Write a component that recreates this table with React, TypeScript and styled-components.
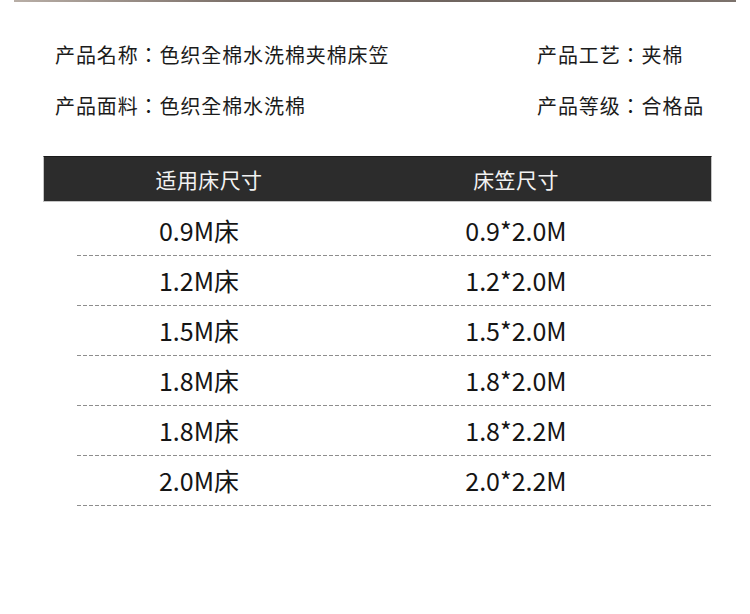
import React from "react";
import styled, { createGlobalStyle } from "styled-components";

const GlobalStyle = createGlobalStyle`
    html, body {
        margin: 0;
        padding: 0;
        background: #ffffff;
    }
    body {
        font-family: "Noto Sans CJK SC", "Noto Sans", sans-serif;
        color: #1b1b1b;
    }
`;

const Page = styled.div`
    width: 750px;
    height: 614px;
    overflow: hidden;
    background: #fff;
`;

const TopBar = styled.div`
    height: 2px;
    margin: 0 14px;
    background: linear-gradient(90deg, #b8aea6 0%, #7d716a 30%, #6f655f 60%, #7c726c 100%);
`;

const InfoGrid = styled.div`
    display: grid;
    grid-template-columns: 482px auto;
    grid-auto-rows: 51px;
    padding: 27px 0 0 55px;
`;

const InfoItem = styled.div`
    font-family: "Noto Sans CJK TC", "Noto Sans CJK SC", sans-serif;
    font-size: 20px;
    line-height: 51px;
    letter-spacing: 0.9px;
    white-space: nowrap;
    color: #1b1b1b;
`;

const Table = styled.div`
    margin-top: 25px;
`;

const HeaderRow = styled.div`
    display: grid;
    grid-template-columns: 330px 284px;
    align-items: center;
    height: 44px;
    margin: 0 38px 0 43px;
    background: #2c2c2c;
    border: 1px solid #c4c4c4;
    border-top-color: #1a1a1a;
    box-sizing: content-box;
`;

const HeaderCell = styled.div`
    text-align: center;
    color: #f2f2f2;
    font-size: 21px;
    letter-spacing: 0.4px;
    line-height: 44px;
`;

const Body = styled.div`
    margin: 4px 39px 0 77px;
`;

const Row = styled.div`
    display: grid;
    grid-template-columns: 244px 390px;
    height: 49px;
    align-items: center;
`;

const Cell = styled.div`
    text-align: center;
    font-size: 25px;
    line-height: 49px;
    color: #151515;
`;

const Divider = styled.div`
    height: 1px;
    background-image: repeating-linear-gradient(
        90deg,
        #8e8e8e 0px,
        #8e8e8e 4px,
        transparent 4px,
        transparent 6px
    );
`;

const info = [
    "产品名称：色织全棉水洗棉夹棉床笠",
    "产品工艺：夹棉",
    "产品面料：色织全棉水洗棉",
    "产品等级：合格品",
];

const sizes = [
    ["0.9M床", "0.9*2.0M"],
    ["1.2M床", "1.2*2.0M"],
    ["1.5M床", "1.5*2.0M"],
    ["1.8M床", "1.8*2.0M"],
    ["1.8M床", "1.8*2.2M"],
    ["2.0M床", "2.0*2.2M"],
];

const App: React.FC = () => {
    return (
        <Page>
            <GlobalStyle />
            <TopBar />
            <InfoGrid>
                {info.map((t) => (
                    <InfoItem key={t}>{t}</InfoItem>
                ))}
            </InfoGrid>
            <Table>
                <HeaderRow>
                    <HeaderCell>适用床尺寸</HeaderCell>
                    <HeaderCell>床笠尺寸</HeaderCell>
                </HeaderRow>
                <Body>
                    {sizes.map(([bed, sheet], i) => (
                        <React.Fragment key={i}>
                            <Row>
                                <Cell>{bed}</Cell>
                                <Cell>{sheet}</Cell>
                            </Row>
                            <Divider />
                        </React.Fragment>
                    ))}
                </Body>
            </Table>
        </Page>
    );
};

export default App;
